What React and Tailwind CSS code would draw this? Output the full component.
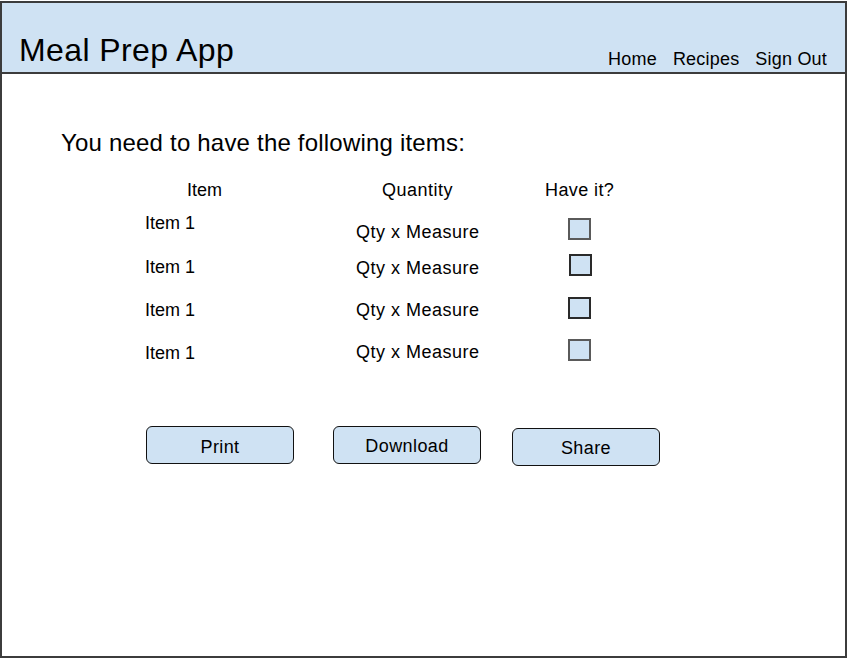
import React from "react";

const rows = [
  { h: "h-[40px]", item: "mt-[3px]", qty: "mt-[12px]", cb: "mt-[8px] ml-[23px] border-[#5a5a5a]" },
  { h: "h-[42px]", item: "mt-[7px]", qty: "mt-[8px]", cb: "mt-[4px] ml-[24px] border-[#2a2a2a]" },
  { h: "h-[43px]", item: "mt-[8px]", qty: "mt-[8px]", cb: "mt-[5px] ml-[23px] border-[#2a2a2a]" },
  { h: "h-[30px]", item: "mt-[8px]", qty: "mt-[7px]", cb: "mt-[4px] ml-[23px] border-[#5a5a5a]" },
];

export default function App() {
  return (
    <div className="w-[849px] h-[659px] bg-white pt-px font-['Liberation_Sans',Arial,sans-serif] text-black">
      <div className="w-[847px] h-[657px] border-2 border-[#3c3c3c] flex flex-col">
        <header className="h-[71px] shrink-0 bg-[#cfe2f3] border-b-2 border-[#3c3c3c] flex items-end justify-between pl-[17px] pr-[18px]">
          <h1 className="text-[32px] leading-[36px] mb-[4px] tracking-[0.4px]">Meal Prep App</h1>
          <nav className="flex gap-[16px] text-[18px] leading-[20px] mb-[3px] tracking-[0.2px]">
            <span>Home</span>
            <span>Recipes</span>
            <span>Sign Out</span>
          </nav>
        </header>
        <main className="flex-1 pl-[59px] pt-[55px]">
          <h2 className="text-[24px] leading-[28px] tracking-[0.2px]">You need to have the following items:</h2>
          <div className="ml-[83px] mt-[23px] text-[18px] leading-[20px]">
            <div className="flex h-[30px]">
              <div className="w-[212px] pl-[43px]">Item</div>
              <div className="w-[189px] pl-[26px] tracking-[0.5px]">Quantity</div>
              <div className="tracking-[0.4px]">Have it?</div>
            </div>
            {rows.map((r, i) => (
              <div key={i} className={`flex items-start ${r.h}`}>
                <div className={`w-[212px] pl-px ${r.item}`}>Item 1</div>
                <div className={`w-[189px] tracking-[0.5px] ${r.qty}`}>Qty x Measure</div>
                <div className={`w-[23px] h-[22px] border-2 bg-[#cfe2f3] ${r.cb}`} />
              </div>
            ))}
            <div className="flex items-start mt-[61px] ml-[2px]">
              <button className="w-[148px] h-[38px] rounded-[6px] border border-[#111] bg-[#cfe2f3] text-[18px] leading-[20px] pt-[4px] tracking-[0.4px]">Print</button>
              <button className="ml-[39px] w-[148px] h-[38px] rounded-[6px] border border-[#111] bg-[#cfe2f3] text-[18px] leading-[20px] pt-[2px] tracking-[0.4px]">Download</button>
              <button className="ml-[31px] mt-[2px] w-[148px] h-[38px] rounded-[6px] border border-[#111] bg-[#cfe2f3] text-[18px] leading-[20px] pt-[2px] tracking-[0.4px]">Share</button>
            </div>
          </div>
        </main>
      </div>
    </div>
  );
}
